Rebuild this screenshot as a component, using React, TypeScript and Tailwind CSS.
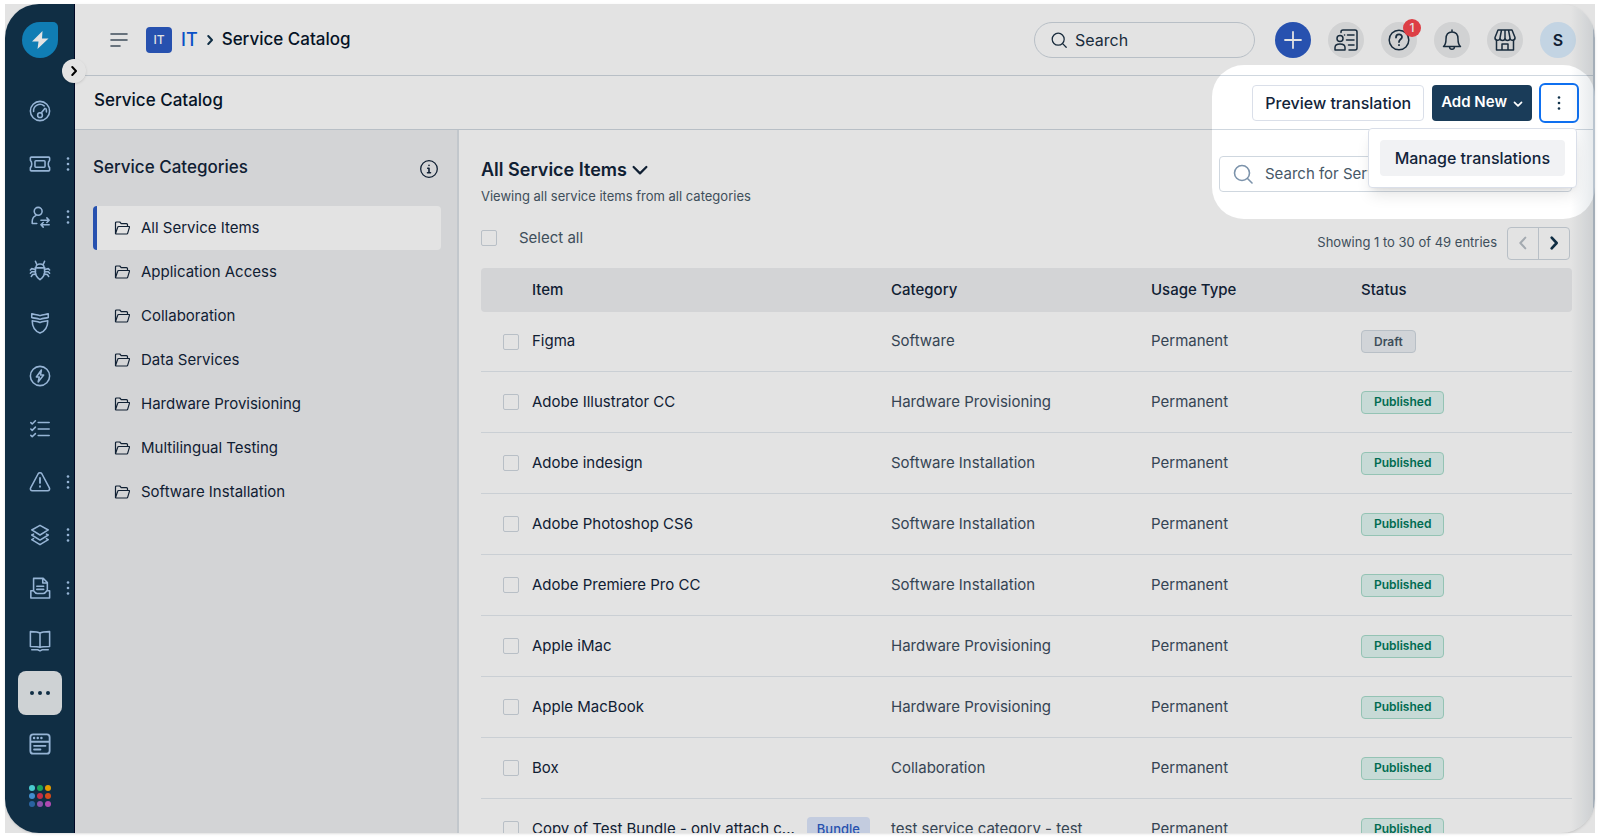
import React from "react";

type Item = {
  name: string;
  category: string;
  status: "Draft" | "Published";
  bundle?: boolean;
};

const categories = [
  "All Service Items",
  "Application Access",
  "Collaboration",
  "Data Services",
  "Hardware Provisioning",
  "Multilingual Testing",
  "Software Installation",
];

const items: Item[] = [
  { name: "Figma", category: "Software", status: "Draft" },
  { name: "Adobe Illustrator CC", category: "Hardware Provisioning", status: "Published" },
  { name: "Adobe indesign", category: "Software Installation", status: "Published" },
  { name: "Adobe Photoshop CS6", category: "Software Installation", status: "Published" },
  { name: "Adobe Premiere Pro CC", category: "Software Installation", status: "Published" },
  { name: "Apple iMac", category: "Hardware Provisioning", status: "Published" },
  { name: "Apple MacBook", category: "Hardware Provisioning", status: "Published" },
  { name: "Box", category: "Collaboration", status: "Published" },
  { name: "Copy of Test Bundle - only attach c...", category: "test service category - test", status: "Published", bundle: true },
];

const appColors = ["#54e4ea", "#1fb864", "#ffb000", "#4ba0e8", "#dc3552", "#f0551f", "#2f6fb4", "#9c5bc0", "#c653c8"];

const navItems: { label: string; menu?: boolean; icon: React.ReactNode }[] = [
  {
    label: "Dashboard",
    icon: (
      <>
        <circle cx="12" cy="12" r="10.500" />
        <path d="M5 12.500a7 7 0 0 1 11.500-6M18.500 9.500a7 7 0 0 1 .5 3.500" />
        <circle cx="12" cy="16.500" r="2.600" />
        <path d="m13.500 14 4-5" />
      </>
    ),
  },
  {
    label: "Tickets",
    menu: true,
    icon: (
      <>
        <path d="M2.500 4.500h19a1 1 0 0 1 1 1V8c-1 .8-1.500 2.200-1.500 4s.5 3.200 1.500 4v2.500a1 1 0 0 1-1 1h-19a1 1 0 0 1-1-1V16c1-.8 1.500-2.200 1.500-4s-.5-3.200-1.500-4V5.500a1 1 0 0 1 1-1z" />
        <rect x="6.500" y="8.500" width="11" height="7" rx="1" />
      </>
    ),
  },
  {
    label: "Requests",
    menu: true,
    icon: (
      <>
        <circle cx="10" cy="5.800" r="4.300" />
        <path d="M8.500 19H3.500v-2c0-3.200 1.500-5.500 4-6.500" />
        <path d="M13 15.500h9m-2.500-2.500 2.500 2.500-2.500 2.500M22 20.500h-9m2.500-2.500-2.500 2.500 2.500 2.500" />
      </>
    ),
  },
  {
    label: "Problems",
    icon: (
      <>
        <path d="M7 9.500h10v5.500c0 3.500-3 6-5 7.500C10 21 7 18.500 7 15z" />
        <path d="M7.500 9.500c0-5.500 9-5.500 9 0M7 9.500h10M7 2.500 8.500 6M17 2.500 15.500 6" />
        <path d="M7 11.500 3 10.500 1.500 12M7 14H3l-1.500 1.500M7.500 16.500 4 17l-1.500 2M17 11.500l4-1 1.500 1.500M17 14h4l1.500 1.500M16.500 16.500l3.500.5 1.500 2" />
      </>
    ),
  },
  {
    label: "Changes",
    icon: (
      <>
        <path d="M3 2c2.500 1 5.500.3 9 2 3.500-1.700 6.500-1 9-2v4c-2.500 1-5.500.3-9 2-3.500-1.700-6.500-1-9-2z" />
        <path d="M3.500 9.500c2.500.8 5.500.5 8.500 2 3-1.500 6-1.200 8.500-2 0 6.500-3.500 11.500-8.500 13.500C7 21 3.500 16 3.500 9.500z" />
      </>
    ),
  },
  {
    label: "Releases",
    icon: (
      <>
        <circle cx="12" cy="12" r="10.500" />
        <path d="M13.500 5.500 8 13h3.200L10 18.500l6-7.500h-3.500z" />
      </>
    ),
  },
  {
    label: "Tasks",
    icon: <path d="M10 5h12M10 12h12M10 19h12M2 5l1.500 1.500L7 3M2 12l1.500 1.500L7 10M2 19l1.500 1.500L7 17" />,
  },
  {
    label: "Alerts",
    menu: true,
    icon: (
      <>
        <path d="M10 3 1.800 18.500c-.8 1.500.1 3 1.700 3h17c1.600 0 2.500-1.500 1.700-3L14 3c-.8-1.400-3.200-1.400-4 0z" />
        <path d="M12 7.500V13M12 16.500v.8" strokeWidth="2" />
      </>
    ),
  },
  {
    label: "Assets",
    menu: true,
    icon: (
      <>
        <path d="M12 1.500 21 6.500l-9 5.500-9-5.500z" />
        <path d="m5 11-2 1 9 5.500 9-5.500-2-1M5 16l-2 1 9 5.500 9-5.500-2-1" />
      </>
    ),
  },
  {
    label: "Contracts",
    menu: true,
    icon: (
      <>
        <path d="M5 14V1.500h10.500L20 6v8M15 1.500V6.500h5" />
        <path d="M8.500 10h7.500M8.500 13.500h7.500" />
        <path d="M5 15H2v8h20.500v-8H19.500c-1 1.500-2.500 3-4 3H9c-1.500 0-3-1.500-4-3z" />
      </>
    ),
  },
  {
    label: "Solutions",
    icon: (
      <>
        <path d="M12 3.500C10 2 6 1.800 1.500 1.800V18c4.500 0 8.500 0 10.500 1 2-1 6-1 10.500-1V1.800C18 1.800 14 2 12 3.500zM12 3.500V19" />
        <path d="M3 21.500h6.500l2.500 1.300 2.500-1.300H21" />
      </>
    ),
  },
];

function Kebab({ className }: { className: string }) {
  return (
    <svg viewBox="0 0 4 16" className={className} fill="currentColor" aria-hidden="true">
      <circle cx="2" cy="2.500" r="1.300" />
      <circle cx="2" cy="8" r="1.300" />
      <circle cx="2" cy="13.500" r="1.300" />
    </svg>
  );
}

function Chevron({ dir, className }: { dir: "left" | "right" | "down"; className: string }) {
  const d = { left: "M15.500 4 8 12l7.500 8", right: "m8.500 4 7.500 8-7.500 8", down: "m3.500 8 8.500 8.500L20.500 8" }[dir];
  return (
    <svg viewBox="0 0 24 24" className={className} fill="none" stroke="currentColor" strokeLinecap="round" strokeLinejoin="round" aria-hidden="true">
      <path d={d} />
    </svg>
  );
}

function SearchIcon({ className }: { className: string }) {
  return (
    <svg viewBox="0 0 20 20" className={className} fill="none" stroke="currentColor" strokeWidth="1.600" strokeLinecap="round" aria-hidden="true">
      <circle cx="9" cy="9" r="7.500" />
      <path d="m14.500 14.500 4.500 4.500" />
    </svg>
  );
}

function FolderIcon() {
  return (
    <svg viewBox="0 0 16 16" className="size-4" fill="none" stroke="currentColor" strokeWidth="1.200" strokeLinejoin="round" aria-hidden="true">
      <path d="M1.500 13.500V3a1 1 0 0 1 1-1h3.300l1.400 1.700h5.300a1 1 0 0 1 1 1v1.800" />
      <path d="M1.500 13.500 3.700 7.200a1 1 0 0 1 1-.7H15a.5.5 0 0 1 .5.700l-1.800 6a1 1 0 0 1-1 .8H2a.5.5 0 0 1-.5-.5z" />
    </svg>
  );
}

function HeaderButton({ label, children }: { label: string; children: React.ReactNode }) {
  return (
    <button aria-label={label} className="relative flex size-9 items-center justify-center rounded-full bg-[#ebeced] text-[#1d3245]">
      <svg viewBox="0 0 24 24" className="size-6" fill="none" stroke="currentColor" strokeWidth="1.500" strokeLinecap="round" strokeLinejoin="round">
        {children}
      </svg>
    </button>
  );
}

function Sidebar() {
  return (
    <nav className="relative flex w-[70px] shrink-0 flex-col border-r border-[#00082a] bg-[#12344d] text-[#a9cbf0]">
      <a href="#" aria-label="Home" className="mx-auto mt-[18px] block size-9">
        <svg viewBox="0 0 36 36" className="size-9">
          <path d="M18 0h13a5 5 0 0 1 5 5v13A18 18 0 1 1 18 0z" fill="#128dcb" />
          <path d="M20.500 9 10 19.500h6.500L15.500 27 26.500 16.500H20z" fill="#fff" />
        </svg>
      </a>
      <ul className="mt-[26px] flex flex-col">
        {navItems.map((item) => (
          <li key={item.label} className="relative flex h-[53px] items-center justify-center">
            <a href="#" aria-label={item.label}>
              <svg viewBox="0 0 24 24" className="size-[22px]" fill="none" stroke="currentColor" strokeWidth="1.700" strokeLinecap="round" strokeLinejoin="round">
                {item.icon}
              </svg>
            </a>
            {item.menu && <Kebab className="absolute right-1 h-4 w-1" />}
          </li>
        ))}
      </ul>
      <button aria-label="More" className="mx-auto mt-1 flex size-11 shrink-0 items-center justify-center gap-1 rounded-lg bg-[#e8ecef]">
        <span className="size-1 rounded-full bg-[#12344d]" />
        <span className="size-1 rounded-full bg-[#12344d]" />
        <span className="size-1 rounded-full bg-[#12344d]" />
      </button>
      <a href="#" aria-label="Workspace" className="mx-auto mt-[18px]">
        <svg viewBox="0 0 24 24" className="size-[22px]" fill="none" stroke="currentColor" strokeWidth="2" strokeLinecap="round">
          <rect x="1.500" y="1.500" width="21" height="21" rx="3" />
          <path d="M2 9.500h20M5.500 14H18M5.500 18h7" />
          <path d="M5.500 5.500h.1M9.500 5.500h.1M13.500 5.500h.1" strokeWidth="2.600" />
        </svg>
      </a>
      <a href="#" aria-label="Switcher" className="mx-auto mt-[30px] grid grid-cols-3 gap-0.5">
        {appColors.map((c) => (
          <span key={c} className="size-[6px] rounded-full" style={{ backgroundColor: c }} />
        ))}
      </a>
      <button aria-label="Expand menu" className="absolute top-[55px] -right-3 z-10 flex size-6 items-center justify-center rounded-full bg-white text-black shadow">
        <Chevron dir="right" className="size-3 stroke-4" />
      </button>
    </nav>
  );
}

function TopBar() {
  return (
    <header className="flex h-[72px] items-center border-b border-[#cfd7df] pr-[19px] pl-[35px]">
      <button aria-label="Menu" className="text-[#475867]">
        <svg viewBox="0 0 18 14" className="h-3.5 w-[18px]" fill="none" stroke="currentColor" strokeWidth="1.600" strokeLinecap="round">
          <path d="M1 1h16M1 7h16M1 13h9" />
        </svg>
      </button>
      <div className="ml-[18px] flex size-[26px] items-center justify-center rounded bg-[#2c5cc5] text-xs font-medium text-white">IT</div>
      <a href="#" className="ml-[9px] text-lg font-medium text-[#0c5be0]">IT</a>
      <Chevron dir="right" className="mx-[6px] size-3 stroke-4 text-[#12344d]" />
      <span className="text-[17px] font-medium text-[#07162b]">Service Catalog</span>
      <label className="ml-auto flex h-9 w-[221px] items-center gap-2 rounded-full border border-[#cfd7df] px-4 text-[#1d3245]">
        <SearchIcon className="size-4" />
        <input aria-label="Search" placeholder="Search" className="min-w-0 flex-1 text-base outline-none placeholder:text-[#1d3245]" />
      </label>
      <div className="ml-5 flex items-center gap-[17px]">
        <button aria-label="New" className="flex size-9 items-center justify-center rounded-full bg-[#2c5cc5] text-white">
          <svg viewBox="0 0 18 18" className="size-[18px]" stroke="currentColor" strokeWidth="1.800" strokeLinecap="round">
            <path d="M9 1v16M1 9h16" />
          </svg>
        </button>
        <HeaderButton label="Contacts">
          <path d="M7 4.500V4a2 2 0 0 1 2-2h12a2 2 0 0 1 2 2v16a2 2 0 0 1-2 2h-6" />
          <circle cx="6" cy="10.500" r="3" />
          <path d="M1 22v-2.500C1 17 3 16 6 16s5 1 5 3.500V22zM10.500 7h.1M13.500 7H20M12.500 12H20M14.500 17H20" />
        </HeaderButton>
        <div className="relative">
          <HeaderButton label="Help">
            <circle cx="12" cy="12" r="9.800" />
            <path d="M9 9.500c0-4 6-4 6-.5 0 2.300-3 2.300-3 5M12 17v.2" strokeWidth="1.800" />
          </HeaderButton>
          <span className="absolute -top-[3px] -right-1 flex size-[18px] items-center justify-center rounded-full bg-[#f9474e] text-xs font-medium text-white">1</span>
        </div>
        <HeaderButton label="Notifications">
          <path d="M3.500 18.500c2.500-2 2.500-4 2.500-7.500 0-4 2-7 6-7s6 3 6 7c0 3.500 0 5.500 2.500 7.500zM12 4V2M9.500 19c.3 3 4.700 3 5 0" />
        </HeaderButton>
        <HeaderButton label="Marketplace">
          <path d="M5 2h14l3 7.500a2.500 2.500 0 0 1-5 .5 2.500 2.500 0 0 1-5 0 2.500 2.500 0 0 1-5 0 2.500 2.500 0 0 1-5-.5zM8.500 2 7 10M15.500 2 17 10M12 2v8M3.500 12.500V22h17v-9.500M9 22v-6h6v6" />
        </HeaderButton>
        <button aria-label="Profile" className="size-9 rounded-full bg-[#dcefff] text-base font-semibold text-[#12243a]">S</button>
      </div>
    </header>
  );
}

function Toolbar() {
  return (
    <div className="relative flex h-[54px] items-center border-b border-[#cfd7df] pr-4 pl-[19px]">
      <h1 className="mr-auto mb-[3px] text-[17px] font-medium text-[#07162b]">Service Catalog</h1>
      <button className="h-9 rounded border border-[#dadfe9] px-3 text-base font-medium text-[#12243a]">Preview translation</button>
      <button className="ml-2 flex h-9 items-center gap-1.5 rounded bg-[#1a3c59] px-[9px] text-[15px] font-semibold text-white">
        Add New
        <Chevron dir="down" className="mt-0.5 size-2.5 stroke-4" />
      </button>
      <button aria-label="More actions" className="ml-[7px] flex size-10 items-center justify-center rounded-md border-2 border-[#0f70f0] text-[#12344d]">
        <Kebab className="h-4 w-1" />
      </button>
      <div role="menu" className="absolute top-[52px] right-[18px] z-10 rounded border border-[#dadfe9] bg-white p-[11px] shadow-lg">
        <button role="menuitem" className="h-9 rounded bg-[#f1f2f4] px-[15px] text-base font-medium text-[#12243a]">Manage translations</button>
      </div>
    </div>
  );
}

function Categories() {
  return (
    <aside className="w-[384px] shrink-0 border-r-2 border-[#dae0e6] bg-[#eeeff1] pr-4 pl-[18px]">
      <div className="flex h-[76px] items-center justify-between pr-0.5">
        <h2 className="text-[17px] font-medium text-[#12243a]">Service Categories</h2>
        <svg viewBox="0 0 20 20" className="size-5" fill="none" stroke="#12243a" strokeWidth="1.300" strokeLinecap="round">
          <circle cx="10" cy="11" r="8.300" />
          <path d="M10 10.200V14.500M8.700 10.200H10M8.500 14.700h3M10 7.200v.2" strokeWidth="1.600" />
        </svg>
      </div>
      <ul>
        {categories.map((c, i) => (
          <li key={c}>
            <a
              href="#"
              className={`flex h-11 items-center gap-[11px] rounded border-l-4 pl-[17px] text-[15px] text-[#12243a] ${i === 0 ? "border-[#2c5cc5] bg-white" : "border-transparent"}`}
            >
              <FolderIcon />
              {c}
            </a>
          </li>
        ))}
      </ul>
    </aside>
  );
}

const checkbox = "block size-4 appearance-none rounded-xs border border-[#cfd7df]";

function ItemsTable() {
  return (
    <table className="w-full table-fixed border-separate border-spacing-0 text-left text-[15px]">
      <colgroup>
        <col className="w-[51px]" />
        <col className="w-[359px]" />
        <col className="w-[260px]" />
        <col className="w-[210px]" />
        <col />
      </colgroup>
      <thead>
        <tr className="h-11 text-[#12243a]">
          <th className="rounded-l bg-[#eeeff1]" aria-label="Select" />
          <th className="bg-[#eeeff1] font-medium">Item</th>
          <th className="bg-[#eeeff1] font-medium">Category</th>
          <th className="bg-[#eeeff1] font-medium">Usage Type</th>
          <th className="rounded-r bg-[#eeeff1] font-medium">Status</th>
        </tr>
      </thead>
      <tbody className="text-[#3c4d5e] [&_td]:border-b [&_td]:border-[#e3e9ef]">
        {items.map((item) => (
          <tr key={item.name} className="h-[61px] first:h-[60px]">
            <td className="pl-[22px]">
              <input type="checkbox" aria-label={`Select ${item.name}`} className={checkbox} />
            </td>
            <td className="text-[#12243a]">
              <div className="flex items-center gap-3 whitespace-nowrap">
                {item.name}
                {item.bundle && <span className="rounded bg-[#dbe6fb] px-2.5 text-[13px] leading-6 font-medium text-[#2c5cc5]">Bundle</span>}
              </div>
            </td>
            <td>{item.category}</td>
            <td>Permanent</td>
            <td>
              <span
                className={`inline-flex h-[23px] items-center rounded border px-3 align-middle text-xs font-semibold ${
                  item.status === "Draft" ? "border-[#cfd7df] bg-[#ebeff3] text-[#475867]" : "border-[#a7dccb] bg-[#e0f5f1] text-[#00795b]"
                }`}
              >
                {item.status}
              </span>
            </td>
          </tr>
        ))}
      </tbody>
    </table>
  );
}

export default function App() {
  return (
    <div className="h-screen bg-white p-[5px] pt-1 font-[Inter,sans-serif]">
      <div className="h-full bg-[#e3e3e3]">
        <div className="relative flex h-full overflow-hidden rounded-[34px] bg-white shadow">
          <Sidebar />
          <div className="flex min-w-0 flex-1 flex-col">
            <TopBar />
            <Toolbar />
            <div className="flex min-h-0 flex-1">
              <Categories />
              <main className="min-w-0 flex-1 overflow-hidden pr-[23px] pl-[22px]">
                <div className="flex items-start justify-between pt-[26px]">
                  <div>
                    <button className="flex items-center gap-1 text-lg leading-7 font-semibold text-[#12243a]">
                      All Service Items
                      <Chevron dir="down" className="size-[18px] stroke-3" />
                    </button>
                    <p className="text-[13px] leading-6 text-[#475867]">Viewing all service items from all categories</p>
                  </div>
                  <label className="flex h-9 w-[353px] items-center gap-3 rounded border border-[#cfd7df] px-[13px] text-[#475867]">
                    <SearchIcon className="size-5 text-[#7c93ab]" />
                    <input aria-label="Search for Service Items" placeholder="Search for Service Items" className="min-w-0 flex-1 text-[15px] outline-none placeholder:text-[#475867]" />
                  </label>
                </div>
                <div className="flex h-[60px] items-center justify-between text-[#475867]">
                  <label className="flex items-center gap-[22px] text-[15px]">
                    <input type="checkbox" className={checkbox} />
                    Select all
                  </label>
                  <div className="flex items-center gap-2.5 pt-2.5 pr-0.5 text-[13px]">
                    Showing 1 to 30 of 49 entries
                    <div className="flex h-[33px] w-[63px] rounded border border-[#cfd7df]">
                      <button aria-label="Previous page" className="flex flex-1 items-center justify-center text-[#b8bfc6]">
                        <Chevron dir="left" className="size-4 stroke-3" />
                      </button>
                      <button aria-label="Next page" className="flex flex-1 items-center justify-center border-l border-[#cfd7df] text-[#12344d]">
                        <Chevron dir="right" className="size-4 stroke-4" />
                      </button>
                    </div>
                  </div>
                </div>
                <ItemsTable />
              </main>
            </div>
          </div>
          <div className="pointer-events-none absolute inset-y-0 right-0 w-6 rounded-r-[34px] border-r-2 border-[#b9c4cf] bg-linear-to-l from-[#12344d]/10 to-transparent" />
          {/* dims everything except the translation controls */}
          <div className="pointer-events-none absolute top-[61px] right-0 z-20 h-[154px] w-[383px] rounded-[32px] shadow-[0_0_0_2000px_rgba(0,0,0,0.11)]" />
        </div>
      </div>
    </div>
  );
}
